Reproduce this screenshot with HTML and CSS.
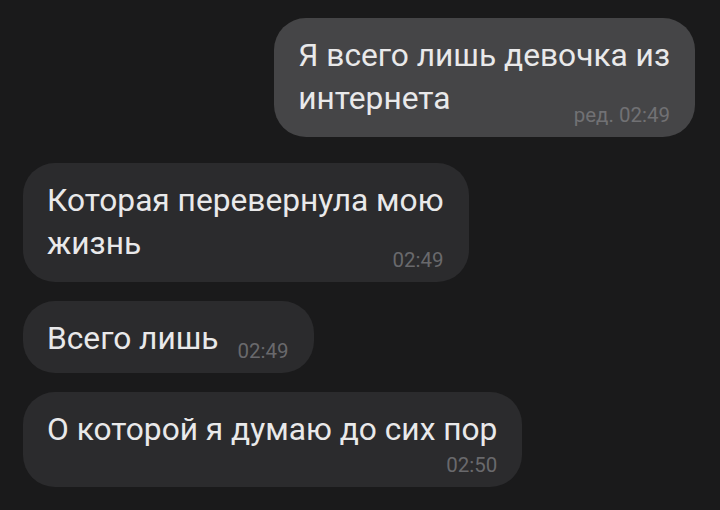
FILE: index.html
```html
<!DOCTYPE html>
<html lang="ru">
<head>
<meta charset="utf-8">
<title>Чат</title>
<link rel="stylesheet" href="styles.css">
</head>
<body>
<main class="chat">
  <section class="group group--out">
    <div class="bubble bubble--out">
      <p class="text">Я всего лишь девочка из<br>интернета<span class="time time--inline">ред. 02:49</span></p>
    </div>
  </section>
  <section class="group group--in">
    <div class="bubble bubble--in">
      <p class="text">Которая перевернула мою<br>жизнь<span class="time time--inline">02:49</span></p>
    </div>
    <div class="bubble bubble--in">
      <p class="text">Всего лишь<span class="time time--single">02:49</span></p>
    </div>
    <div class="bubble bubble--in">
      <p class="text">О которой я думаю до сих пор<span class="time time--block">02:50</span></p>
    </div>
  </section>
</main>
</body>
</html>
```

FILE: styles.css
```css
html, body {
  margin: 0;
  padding: 0;
  background: #1a1a1b;
}

body {
  width: 720px;
  height: 510px;
  overflow: hidden;
  font-family: Roboto, "Noto Sans", "Liberation Sans", sans-serif;
}

.chat {
  display: flex;
  flex-direction: column;
  gap: 26px;
  padding: 18px 25px 0 23px;
}

.group {
  display: flex;
  flex-direction: column;
  gap: 19px;
}

.group--out {
  align-items: flex-end;
}

.group--in {
  align-items: flex-start;
}

.bubble {
  display: flow-root;
  border-radius: 32px;
  padding: 16px 25px 12px 24px;
  color: #e9e9ea;
}

.bubble--out {
  background: #454547;
}

.bubble--in {
  background: #2b2b2d;
}

.text {
  margin: 0;
  font-size: 31.7px;
  line-height: 43px;
  font-weight: 400;
}

.time {
  font-size: 20.5px;
  line-height: 20px;
  color: #69696c;
  white-space: nowrap;
}

.bubble--out .time {
  color: #717174;
}

.time--inline {
  float: right;
  margin: 28px 0 0 19px;
}

.time--single {
  float: right;
  margin: 24px 0 0 19px;
}

.time--block {
  display: block;
  text-align: right;
  margin-top: 4px;
}
```
